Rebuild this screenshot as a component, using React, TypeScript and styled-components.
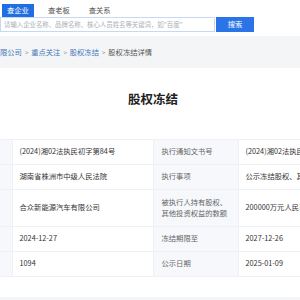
import React from "react";
import styled, { createGlobalStyle } from "styled-components";

const Global = createGlobalStyle`
  html, body { margin: 0; padding: 0; background: #fff; overflow: hidden; }
  body { font-family: "Noto Sans CJK SC", "Noto Sans", sans-serif; width: 300px; }
`;

const Header = styled.div`
  height: 34px;
  padding-top: 4px;
  box-sizing: border-box;
  background: #fff;
`;

const Tabs = styled.div`
  display: flex;
  gap: 9px;
  padding-left: 2px;
  height: 13px;
`;

const Tab = styled.div<{ $active?: boolean }>`
  height: 13px;
  line-height: 13px;
  padding: 0 5px;
  font-size: 7.3px;
  color: ${(p) => (p.$active ? "#fff" : "#555")};
  background: ${(p) => (p.$active ? "#1f6fe2" : "transparent")};
`;

const SearchRow = styled.div`
  display: flex;
  gap: 1px;
  height: 15px;
`;

const Input = styled.div`
  width: 215px;
  box-sizing: border-box;
  border: 1px solid #c6d9f3;
  font-size: 6.4px;
  color: #aab0b8;
  line-height: 13px;
  padding-left: 3px;
  white-space: nowrap;
  overflow: hidden;
`;

const Button = styled.div`
  width: 38px;
  background: #2b74e8;
  color: #fff;
  font-size: 7.3px;
  text-align: center;
  line-height: 15px;
`;

const Crumbs = styled.div`
  margin-top: 2px;
  height: 32px;
  background: #f4f5f7;
  display: flex;
  align-items: center;
  font-size: 7.3px;
  white-space: nowrap;
  gap: 3px;
`;

const Crumb = styled.span<{ $link?: boolean }>`
  color: ${(p) => (p.$link ? "#4477bb" : "#555")};
`;

const Sep = styled.span`
  color: #888;
  font-size: 6px;
`;

const Title = styled.h1`
  margin: 0;
  padding-top: 24px;
  height: 71px;
  box-sizing: border-box;
  text-align: center;
  font-size: 12.5px;
  font-weight: 700;
  color: #222;
  line-height: 14px;
  padding-left: 6px;
`;

const Table = styled.table`
  border-collapse: collapse;
  table-layout: fixed;
  width: 400px;
  font-size: 7.3px;
  line-height: 11.5px;
`;

const LabelCell = styled.td`
  background: #f6f8fb;
  color: #666;
  border: 1px solid #edf0f4;
  padding: 0 8px;
  vertical-align: middle;
`;

const ValueCell = styled.td<{ $h?: number }>`
  background: #fff;
  color: #333;
  border: 1px solid #edf0f4;
  padding: 0 7px;
  height: ${(p) => p.$h ?? 24}px;
  white-space: nowrap;
  overflow: hidden;
  vertical-align: middle;
`;

const EdgeCell = styled.td`
  background: #f6f8fb;
  border: 1px solid #edf0f4;
  border-left: none;
  padding: 0;
`;

const Footer = styled.div`
  margin-top: 20px;
  height: 20px;
  background: #f4f5f7;
`;

const rows: [string, string, string, number?][] = [
  ["(2024)湘02法执民初字第84号", "执行通知文书号", "(2024)湘02法执民初字第84号"],
  ["湖南省株洲市中级人民法院", "执行事项", "公示冻结股权、其他投资权益"],
  ["合众新能源汽车有限公司", "被执行人持有股权、其他投资权益的数额", "200000万元人民币", 36],
  ["2024-12-27", "冻结期限至", "2027-12-26"],
  ["1094", "公示日期", "2025-01-09"],
];

export default function App() {
  return (
    <>
      <Global />
      <Header>
        <Tabs>
          <Tab $active>查企业</Tab>
          <Tab>查老板</Tab>
          <Tab>查关系</Tab>
        </Tabs>
        <SearchRow>
          <Input>请输入企业名称、品牌名称、核心人员姓名等关键词，如"百度"</Input>
          <Button>搜索</Button>
        </SearchRow>
      </Header>
      <Crumbs>
        <Crumb $link>限公司</Crumb>
        <Sep>&gt;</Sep>
        <Crumb $link>重点关注</Crumb>
        <Sep>&gt;</Sep>
        <Crumb $link>股权冻结</Crumb>
        <Sep>&gt;</Sep>
        <Crumb>股权冻结详情</Crumb>
      </Crumbs>
      <Title>股权冻结</Title>
      <Table>
        <colgroup>
          <col style={{ width: 12 }} />
          <col style={{ width: 141 }} />
          <col style={{ width: 85 }} />
          <col style={{ width: 162 }} />
        </colgroup>
        <tbody>
          {rows.map(([a, l, b, h], i) => (
            <tr key={i}>
              <EdgeCell />
              <ValueCell $h={h}>{a}</ValueCell>
              <LabelCell>{l}</LabelCell>
              <ValueCell $h={h}>{b}</ValueCell>
            </tr>
          ))}
        </tbody>
      </Table>
      <Footer />
    </>
  );
}
